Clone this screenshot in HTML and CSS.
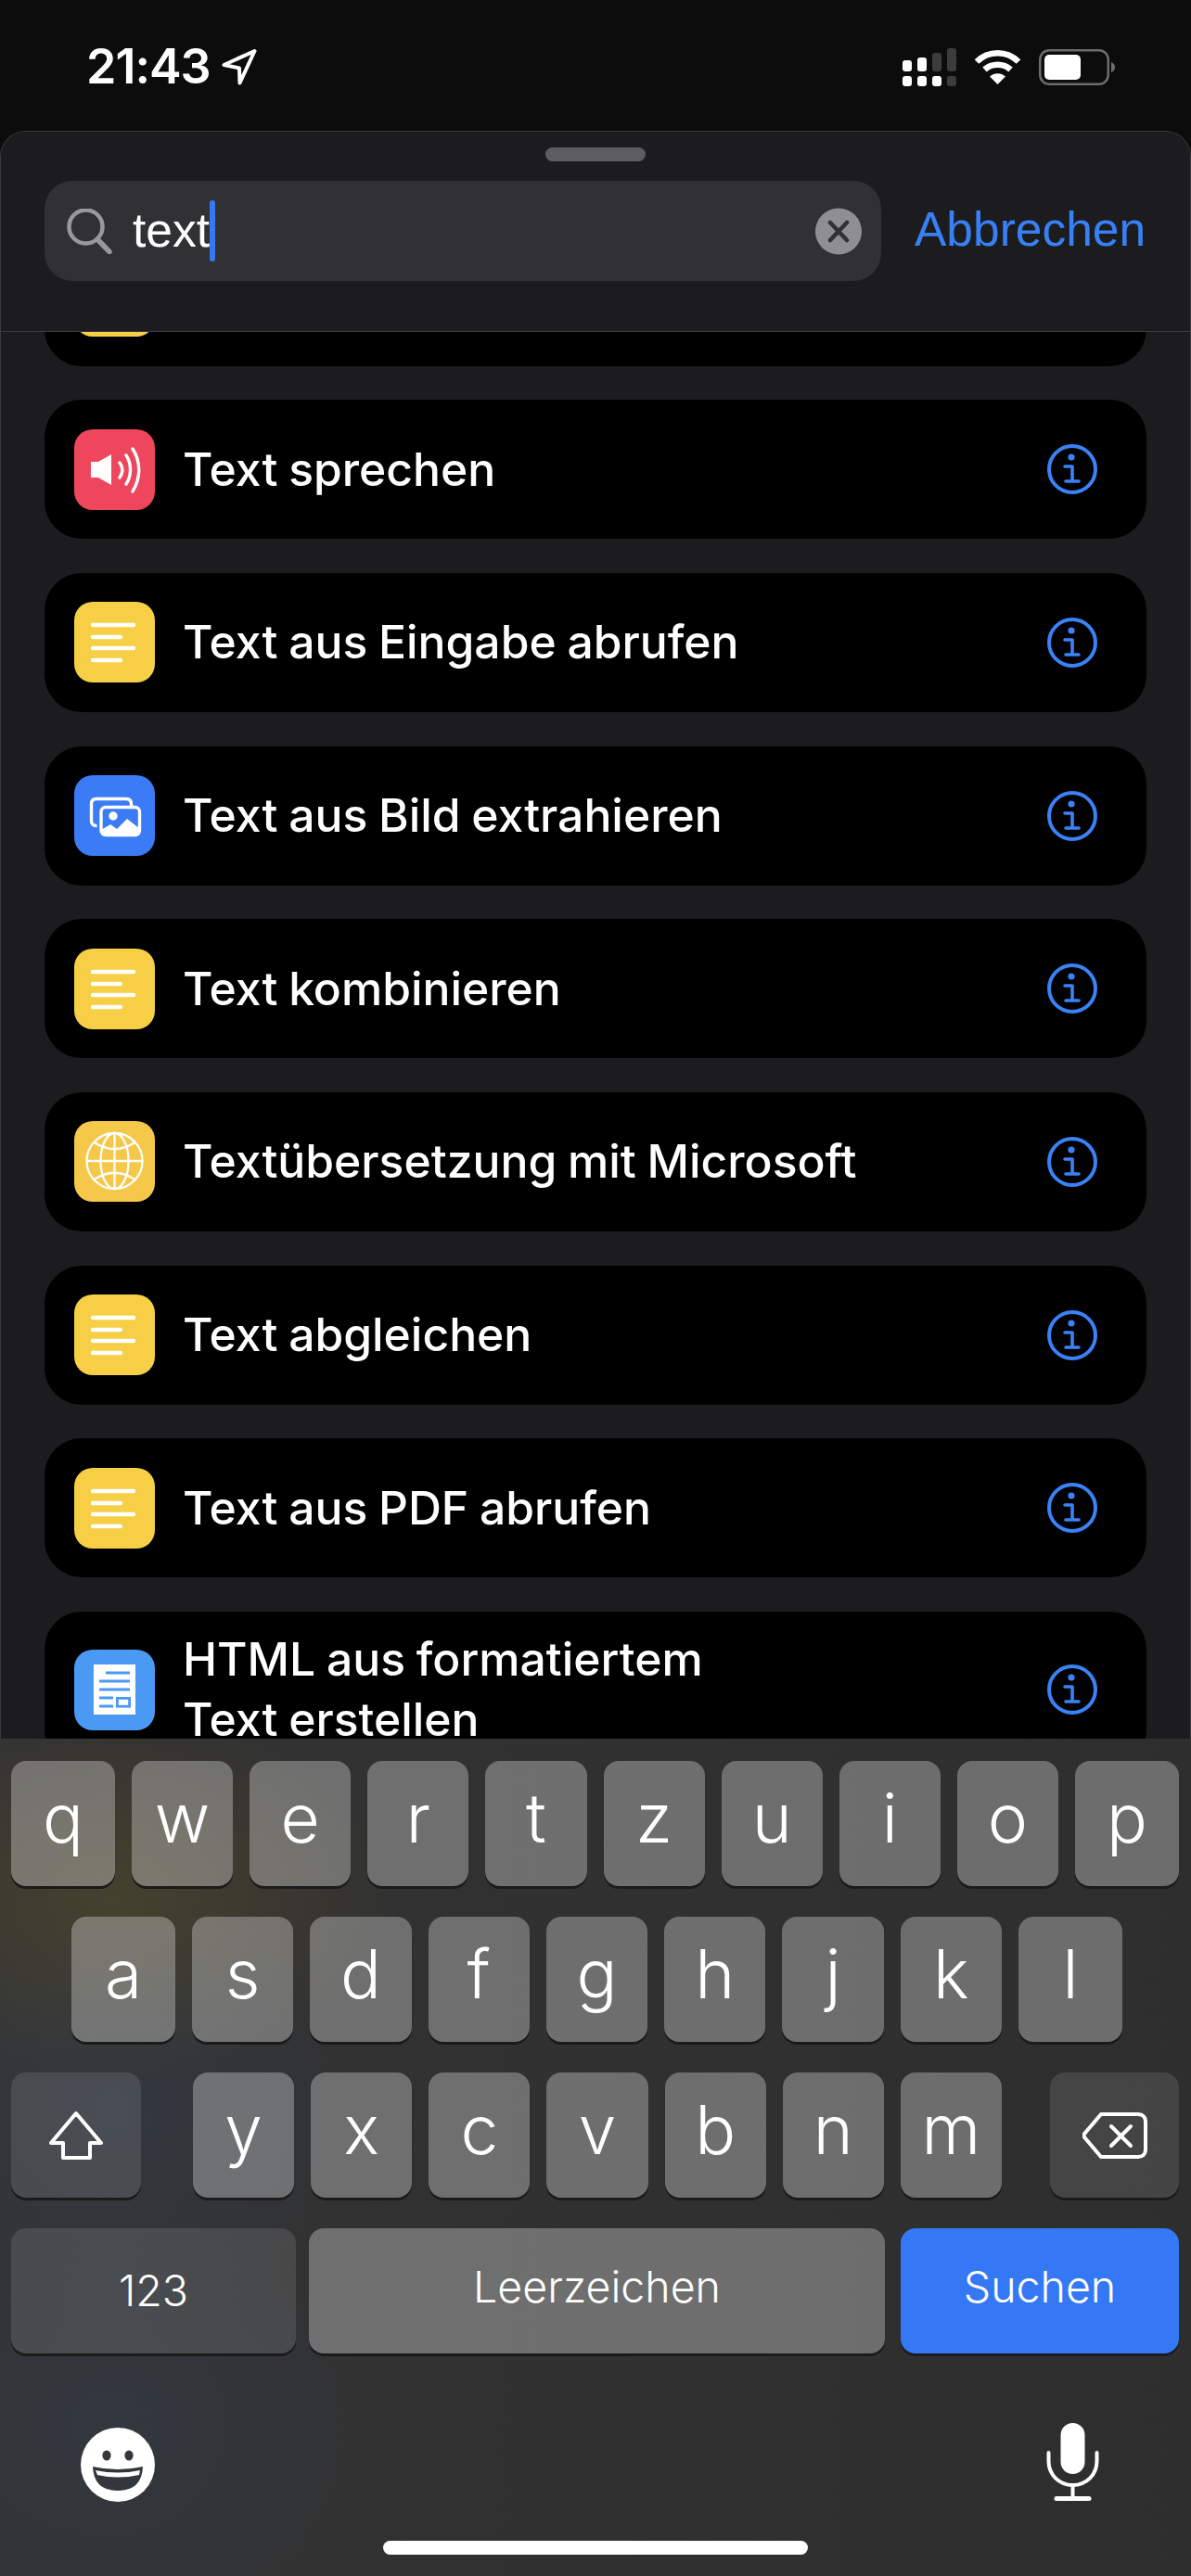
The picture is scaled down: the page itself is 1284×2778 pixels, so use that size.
FILE: index.html
```html
<!DOCTYPE html>
<html lang="de">
<head>
    <meta charset="UTF-8">
    <meta name="viewport" content="width=device-width, initial-scale=1.0">
    <title>Text suchen</title>
    <link rel="stylesheet" href="styles.css">
</head>
<body>
    <!-- Shared icons -->
    <svg class="defs" width="0" height="0">
        <symbol id="info" viewBox="0 0 54 54">
            <circle cx="27" cy="27" r="25" fill="none" stroke="currentColor" stroke-width="4"/>
            <circle cx="26" cy="14" r="3.6" fill="currentColor"/>
            <path d="M19 24h8v16M20 40h14" fill="none" stroke="currentColor" stroke-width="3.6" stroke-linecap="round" stroke-linejoin="round"/>
        </symbol>
        <symbol id="lines" viewBox="0 0 87 87">
            <path d="M20 25h44M20 38h30M20 50h44M20 63h30" fill="none" stroke="#fff" stroke-width="4.4" stroke-linecap="round"/>
        </symbol>
    </svg>

    <div class="status-bar">
        <div class="status-left">
            <span class="time">21:43</span>
            <svg class="arrow" width="38" height="40" viewBox="0 0 38 40"><path d="M35.500 3 2.500 18 19 21.500 19.500 37.500Z" fill="none" stroke="#fff" stroke-width="4" stroke-linejoin="round"/></svg>
        </div>
        <div class="status-right">
            <svg width="58" height="41" viewBox="0 0 58 41">
                <g fill="#fff">
                    <rect x="0" y="13" width="10" height="12" rx="3"/>
                    <rect x="16" y="10" width="10" height="15" rx="3"/>
                    <rect x="0" y="30" width="10" height="11" rx="3"/>
                    <rect x="16" y="30" width="10" height="11" rx="3"/>
                    <rect x="32" y="30" width="10" height="11" rx="3"/>
                </g>
                <g fill="#3c3c3c">
                    <rect x="32" y="5" width="10" height="20" rx="3"/>
                    <rect x="48" y="0" width="10" height="25" rx="3"/>
                    <rect x="48" y="30" width="10" height="11" rx="3"/>
                </g>
            </svg>
            <svg class="wifi" width="51" height="38" viewBox="0 0 51 38">
                <path d="M3 13.500C15.500 1 35.500 1 48 13.500M11.500 22C19 15 32 15 39.500 22" fill="none" stroke="#fff" stroke-width="6.500"/>
                <path d="M25.500 38 17 29.500C21.500 25 29.500 25 34 29.500Z" fill="#fff"/>
            </svg>
            <svg class="battery" width="82" height="39" viewBox="0 0 82 39">
                <rect x="1.250" y="1.250" width="73.500" height="36.500" rx="10" fill="none" stroke="#6c6c6e" stroke-width="2.500"/>
                <rect x="6" y="6" width="39" height="27" rx="5" fill="#fff"/>
                <path d="M78 14c3 1 4 3 4 5.500S81 24 78 25Z" fill="#6c6c6e"/>
            </svg>
        </div>
    </div>

    <div class="sheet">
        <div class="sheet-header">
            <div class="grabber"></div>
            <div class="search-row">
                <div class="search-field">
                    <svg class="search-icon" width="49" height="49" viewBox="0 0 49 49">
                        <circle cx="20.500" cy="19.500" r="18" fill="none" stroke="#98989f" stroke-width="4.500"/>
                        <path d="M33 33 46 46.500" stroke="#98989f" stroke-width="5.500" stroke-linecap="round"/>
                    </svg>
                    <span class="search-text">text</span><span class="caret"></span>
                    <svg class="clear" width="50" height="51" viewBox="0 0 50 51">
                        <circle cx="25" cy="25.500" r="25" fill="#8e8e93"/>
                        <path d="M16 16 34 35M34 16 16 35" stroke="#303035" stroke-width="4.500" stroke-linecap="round"/>
                    </svg>
                </div>
                <span class="cancel">Abbrechen</span>
            </div>
        </div>

        <div class="list">
            <div class="action">
                <div class="app-icon yellow"></div>
            </div>
            <div class="action">
                <svg class="app-icon red" viewBox="0 0 87 87">
                    <path d="M18 35h8l14-8v33l-14-8h-8Z" fill="#fff"/>
                    <path d="M49 36c4 5 4 10 0 16M56 28c6 9 6 22 0 31M63 21c9 14 9 31 0 46" fill="none" stroke="#fff" stroke-width="3.400" stroke-linecap="round"/>
                </svg>
                <span class="action-title">Text sprechen</span>
                <svg class="info"><use href="#info"/></svg>
            </div>
            <div class="action">
                <svg class="app-icon yellow" viewBox="0 0 87 87"><use href="#lines"/></svg>
                <span class="action-title">Text aus Eingabe abrufen</span>
                <svg class="info"><use href="#info"/></svg>
            </div>
            <div class="action">
                <svg class="app-icon blue" viewBox="0 0 87 87">
                    <path d="M24.500 54.500H24c-3.500 0-5.500-2-5.500-5.500V31c0-3.500 2-5.500 5.500-5.500h32c3.500 0 5.500 2 5.500 5.500v2" fill="none" stroke="#fff" stroke-width="3.400"/>
                    <rect x="29" y="34.500" width="41.500" height="30" rx="5" fill="none" stroke="#fff" stroke-width="3.400"/>
                    <circle cx="42" cy="44" r="4.700" fill="#fff"/>
                    <path d="M29 59 39 53 46 58 57 47 71 58V62c0 2-1 3-3 3H32c-2 0-3-1-3-3Z" fill="#fff"/>
                </svg>
                <span class="action-title">Text aus Bild extrahieren</span>
                <svg class="info"><use href="#info"/></svg>
            </div>
            <div class="action">
                <svg class="app-icon yellow" viewBox="0 0 87 87"><use href="#lines"/></svg>
                <span class="action-title">Text kombinieren</span>
                <svg class="info"><use href="#info"/></svg>
            </div>
            <div class="action">
                <svg class="app-icon amber" viewBox="0 0 87 87">
                    <g fill="none" stroke="#fff" stroke-width="2.300">
                        <circle cx="43.500" cy="43" r="30"/>
                        <ellipse cx="43.500" cy="43" rx="15" ry="30"/>
                        <path d="M43.500 13v60M13.500 43h60M21 22.500Q43.500 38 66 22.500M21 63.500Q43.500 48 66 63.500"/>
                    </g>
                </svg>
                <span class="action-title">Textübersetzung mit Microsoft</span>
                <svg class="info"><use href="#info"/></svg>
            </div>
            <div class="action">
                <svg class="app-icon yellow" viewBox="0 0 87 87"><use href="#lines"/></svg>
                <span class="action-title">Text abgleichen</span>
                <svg class="info"><use href="#info"/></svg>
            </div>
            <div class="action">
                <svg class="app-icon yellow" viewBox="0 0 87 87"><use href="#lines"/></svg>
                <span class="action-title">Text aus PDF abrufen</span>
                <svg class="info"><use href="#info"/></svg>
            </div>
            <div class="action action-tall">
                <svg class="app-icon sky" viewBox="0 0 87 87">
                    <rect x="21" y="16" width="45" height="54" fill="#fff"/>
                    <path d="M34 25h26M27 34h33M27 43h33M27 52h15M27 61h15" stroke="#4a9af4" stroke-width="2.800"/>
                    <rect x="46.400" y="52.400" width="13.200" height="8.800" fill="none" stroke="#4a9af4" stroke-width="2.800"/>
                </svg>
                <span class="action-title">HTML aus formatiertem<br>Text erstellen</span>
                <svg class="info"><use href="#info"/></svg>
            </div>
        </div>
    </div>

    <div class="keyboard">
        <div class="key-row">
            <div class="key wide">q</div>
            <div class="key">w</div>
            <div class="key">e</div>
            <div class="key">r</div>
            <div class="key">t</div>
            <div class="key">z</div>
            <div class="key">u</div>
            <div class="key">i</div>
            <div class="key">o</div>
            <div class="key wide">p</div>
        </div>
        <div class="key-row home-row">
            <div class="key wide">a</div>
            <div class="key">s</div>
            <div class="key">d</div>
            <div class="key">f</div>
            <div class="key">g</div>
            <div class="key">h</div>
            <div class="key">j</div>
            <div class="key">k</div>
            <div class="key wide">l</div>
        </div>
        <div class="key-row">
            <div class="key special shift-key">
                <svg width="60" height="54" viewBox="0 0 60 54"><path d="M30 3 57 35H45V51H16V35H3Z" fill="none" stroke="#fff" stroke-width="4" stroke-linejoin="round"/></svg>
            </div>
            <div class="letter-group">
                <div class="key">y</div>
                <div class="key">x</div>
                <div class="key">c</div>
                <div class="key">v</div>
                <div class="key">b</div>
                <div class="key">n</div>
                <div class="key">m</div>
            </div>
            <div class="key special shift-key delete-key">
                <svg width="70" height="50" viewBox="0 0 70 50">
                    <path d="M20 2H60c5 0 8 3 8 8V40c0 5-3 8-8 8H20L3 28c-2-2-2-4 0-6Z" fill="none" stroke="#fff" stroke-width="4" stroke-linejoin="round"/>
                    <path d="M31 15 52 36M52 15 31 36" stroke="#fff" stroke-width="4" stroke-linecap="round"/>
                </svg>
            </div>
        </div>
        <div class="key-row bottom-row">
            <div class="key special label number-key">123</div>
            <div class="key label space-key">Leerzeichen</div>
            <div class="key primary label search-key">Suchen</div>
        </div>
        <div class="kb-tools">
            <svg class="emoji" width="80" height="80" viewBox="0 0 80 80">
                <circle cx="40" cy="40" r="40" fill="#fff"/>
                <ellipse cx="28" cy="30" rx="4.600" ry="5.600" fill="#33373c"/>
                <ellipse cx="52" cy="30" rx="4.600" ry="5.600" fill="#33373c"/>
                <path d="M13 42Q40 48 67 42 66 68 40 68 14 68 13 42Z" fill="#33373c"/>
                <path d="M16 46Q40 51 64 46L63 51Q40 56 18 51Z" fill="#fff"/>
            </svg>
            <svg width="57" height="84" viewBox="0 0 57 84">
                <rect x="15.500" y="0" width="26" height="55" rx="13" fill="#fff"/>
                <path d="M2.500 32V41C2.500 56 14 67 28.500 67S54.500 56 54.500 41V32" fill="none" stroke="#fff" stroke-width="4" stroke-linecap="round"/>
                <path d="M28.500 67V80" stroke="#fff" stroke-width="4"/>
                <path d="M11 81.500H46" stroke="#fff" stroke-width="5" stroke-linecap="round"/>
            </svg>
        </div>
        <div class="home-indicator"></div>
    </div>
</body>
</html>
```

FILE: styles.css
```css
body {
    margin: 0;
    width: 1284px;
    height: 2778px;
    overflow: hidden;
    display: flex;
    flex-direction: column;
    background: #0c0c0d;
    color: white;
    font-family: "Liberation Sans", Arial, sans-serif;
}
.defs {
    display: none;
}
/* Status bar */
.status-bar {
    height: 141px;
    flex-shrink: 0;
    box-sizing: border-box;
    padding: 52px 82px 0 93px;
    display: flex;
    justify-content: space-between;
    align-items: flex-start;
}
.status-left {
    display: flex;
    align-items: center;
    gap: 12px;
}
.time {
    font-family: Inter, sans-serif;
    font-size: 52px;
    font-weight: 600;
    line-height: 40px;
    letter-spacing: -1px;
}
.status-right {
    display: flex;
    align-items: flex-start;
    gap: 19px;
}
.wifi, .battery {
    margin-top: 1px;
}
/* Sheet */
.sheet {
    height: 1734px;
    flex-shrink: 0;
    box-sizing: border-box;
    background: #1c1c1e;
    border: 1px solid #3a3a3c;
    border-bottom: none;
    border-radius: 28px 28px 0 0;
    overflow: hidden;
}
.sheet-header {
    position: relative;
    z-index: 1;
    height: 216px;
    box-sizing: border-box;
    padding-top: 17px;
    background: #1c1c1e;
    border-bottom: 1px solid #3a3a3c;
}
.grabber {
    width: 108px;
    height: 15px;
    margin: 0 auto 21px;
    border-radius: 8px;
    background: #5d5d60;
}
.search-row {
    display: flex;
    align-items: center;
    padding: 0 47px;
    gap: 36px;
}
.search-field {
    width: 902px;
    height: 108px;
    box-sizing: border-box;
    padding: 0 21px 0 24px;
    display: flex;
    align-items: center;
    background: #303035;
    border-radius: 30px;
}
.search-icon {
    margin-right: 22px;
    flex-shrink: 0;
}
.search-text {
    font-size: 51.500px;
    line-height: 1;
}
.caret {
    width: 6px;
    height: 66px;
    border-radius: 3px;
    background: #3478f6;
}
.clear {
    margin-left: auto;
}
.cancel {
    font-size: 51.500px;
    line-height: 1;
    padding-bottom: 3px;
    color: #3880f5;
}
/* Action list, scrolled so the first row sits under the header */
.list {
    margin-top: -113.500px;
    padding: 0 47px;
    display: flex;
    flex-direction: column;
    gap: 36.700px;
}
.action {
    height: 150px;
    flex-shrink: 0;
    box-sizing: border-box;
    padding: 0 53px 0 32px;
    display: flex;
    align-items: center;
    background: black;
    border-radius: 40px;
}
.action-tall {
    height: 168px;
}
.app-icon {
    width: 87px;
    height: 87px;
    flex-shrink: 0;
    border-radius: 20px;
}
.yellow { background: #f6cf46; }
.amber { background: #f5c84a; }
.red { background: #ee475d; }
.blue { background: #3b7cf6; }
.sky { background: #4a9af4; }
.action-title {
    margin-left: 30px;
    font-family: Inter, sans-serif;
    font-size: 49.800px;
    font-weight: 500;
    line-height: 65px;
    word-spacing: -1.500px;
}
.info {
    width: 54px;
    height: 54px;
    margin-left: auto;
    flex-shrink: 0;
    color: #3a82f7;
}
/* Keyboard */
.keyboard {
    height: 903px;
    flex-shrink: 0;
    box-sizing: border-box;
    padding-top: 24px;
    position: relative;
    background:
        radial-gradient(ellipse 300px 200px at 123px 171px, rgba(110, 95, 35, 0.32), transparent),
        radial-gradient(ellipse 260px 260px at 123px 400px, rgba(50, 70, 100, 0.26), transparent),
        radial-gradient(ellipse 280px 240px at 123px 740px, rgba(50, 70, 100, 0.26), transparent),
        linear-gradient(90deg, #333333, #2e2e2e);
}
.key-row {
    display: flex;
    gap: 18px;
    padding: 0 13px 0 12px;
    margin-bottom: 33px;
}
.home-row {
    padding: 0 74px 0 77px;
}
.letter-group {
    width: 872px;
    margin-left: 38px;
    display: flex;
    gap: 18px;
}
.bottom-row {
    gap: 0;
    margin-bottom: 0;
}
.key {
    height: 135px;
    flex: 1;
    box-sizing: border-box;
    padding-bottom: 13px;
    display: flex;
    align-items: center;
    justify-content: center;
    font-family: Inter, sans-serif;
    font-size: 73px;
    font-weight: 300;
    line-height: 1;
    background: rgba(255, 255, 255, 0.3);
    border-radius: 16px;
    box-shadow: 0 3px 0 #1b1b1c;
}
.key.wide {
    flex: none;
    width: 112px;
}
.special {
    background: rgba(255, 255, 255, 0.11);
}
.shift-key {
    flex: none;
    width: 140px;
    padding-bottom: 0;
}
.delete-key {
    width: 139px;
    margin-left: auto;
}
.label {
    flex: none;
    font-size: 46.500px;
    padding-bottom: 8px;
}
.number-key {
    width: 307px;
    margin-right: 14px;
    padding-bottom: 0;
}
.space-key {
    width: 621px;
    margin-right: 17px;
}
.search-key {
    width: 300px;
}
.primary {
    background: #3578f6;
}
.kb-tools {
    padding: 75px 99px 0 87px;
    display: flex;
    justify-content: space-between;
    align-items: flex-start;
}
.emoji {
    margin-top: 5px;
}
.home-indicator {
    width: 458px;
    height: 15px;
    margin: 42px auto 0;
    border-radius: 8px;
    background: white;
}
```
